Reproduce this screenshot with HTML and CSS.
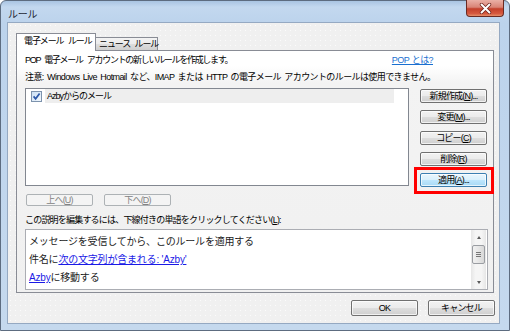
FILE: index.html
```html
<!DOCTYPE html>
<html lang="ja">
<head>
<meta charset="utf-8">
<title>ルール</title>
<link rel="stylesheet" href="styles.css">
</head>
<body>
<div class="window">
  <div class="titlebar">
    <span class="title">ルール</span>
    <div class="close">
      <svg width="13" height="11" viewBox="0 0 13 11"><path d="M2.5 1.5 L10.5 9.5 M10.5 1.5 L2.5 9.5" stroke="#6b2119" stroke-width="3.4" stroke-linecap="round"/><path d="M2.5 1.5 L10.5 9.5 M10.5 1.5 L2.5 9.5" stroke="#fff" stroke-width="2" stroke-linecap="round"/></svg>
    </div>
  </div>
  <div class="client">
    <div class="tabs">
      <div class="tab active">電子メール ルール</div>
      <div class="tab">ニュース ルール</div>
    </div>
    <div class="panel">
      <div class="row1">
        <span class="txt1">POP 電子メール アカウントの新しいルールを作成します。</span>
        <a class="poplink">POP とは?</a>
      </div>
      <div class="note">注意: Windows Live Hotmail など、IMAP または HTTP の電子メール アカウントのルールは使用できません。</div>
      <div class="mid">
        <div class="listbox">
          <div class="item">
            <svg class="cb" width="11" height="11" viewBox="0 0 11 11">
              <defs><linearGradient id="cbg" x1="0" y1="0" x2="1" y2="1"><stop offset="0" stop-color="#c9def3"/><stop offset="1" stop-color="#f4f9fd"/></linearGradient></defs>
              <rect x="0.5" y="0.5" width="10" height="10" fill="url(#cbg)" stroke="#7d93ad"/>
              <path d="M2.6 5.4 L4.6 7.8 L8.6 2.4" fill="none" stroke="#2c58a8" stroke-width="1.7"/>
            </svg>
            <span class="itemtext">Azbyからのメール</span>
          </div>
        </div>
        <div class="btncol">
          <div class="btn">新規作成(<u>N</u>)...</div>
          <div class="btn">変更(<u>M</u>)...</div>
          <div class="btn">コピー(<u>C</u>)</div>
          <div class="btn">削除(<u>R</u>)</div>
          <div class="btn apply">適用(<u>A</u>)...</div>
        </div>
      </div>
      <div class="updown">
        <div class="btn disabled">上へ(<u>U</u>)</div>
        <div class="btn disabled">下へ(<u>D</u>)</div>
      </div>
      <div class="label">この説明を編集するには、下線付きの単語をクリックしてください(<u>L</u>):</div>
      <div class="desc">
        <div class="lines">
          <div class="line">メッセージを受信してから、このルールを適用する</div>
          <div class="line">件名に<a class="dlink">次の文字列が含まれる: 'Azby'</a></div>
          <div class="line"><a class="dlink">Azby</a>に移動する</div>
        </div>
        <div class="scrollbar">
          <div class="arrow up"></div>
          <div class="thumb"><span class="grip"></span></div>
          <div class="track"></div>
          <div class="arrow down"></div>
        </div>
      </div>
    </div>
    <div class="footer">
      <div class="btn big">OK</div>
      <div class="btn big">キャンセル</div>
    </div>
  </div>
</div>
</body>
</html>
```
FILE: styles.css
```css
* { box-sizing: border-box; }
html, body { margin: 0; padding: 0; }
body {
  width: 510px;
  height: 331px;
  overflow: hidden;
  font-family: "Liberation Sans", "Noto Sans CJK JP", sans-serif;
  font-size: 9px;
  color: #000;
  background: #fff;
}
.window {
  width: 510px;
  height: 331px;
  display: flex;
  flex-direction: column;
  padding: 0 9px 6px 6px;
  border: 1px solid #5d6c80;
  border-radius: 6px 6px 0 0;
  background: linear-gradient(180deg, #a9c4e2 0, #c3d8ef 6px, #bcd3ec 22px, #c5d9ee 100%);
}
.titlebar {
  height: 21px;
  display: flex;
  align-items: flex-start;
  flex: none;
}
.title {
  margin-top: 5px;
  margin-left: 1px;
  font-size: 10px;
  letter-spacing: -0.2px;
  color: #1e2733;
}
.close {
  margin-left: auto;
  margin-right: -4px;
  margin-top: -1px;
  width: 38px;
  height: 17px;
  border: 1px solid #6a2a22;
  border-top: none;
  border-radius: 0 0 4px 4px;
  background: linear-gradient(180deg, #eab0a6 0, #d98476 45%, #c3402b 55%, #d6593f 85%, #e58f6a 100%);
  display: flex;
  align-items: center;
  justify-content: center;
}
.close svg { display: block; }
.client {
  flex: 1;
  border: 1px solid #95a9c2;
  background-color: #f0f0f0;
  background-image: radial-gradient(circle, #fbfbfb 0.6px, transparent 0.9px);
  background-size: 5px 5px;
  padding: 10px 7px 0 8px;
  display: flex;
  flex-direction: column;
}
.tabs {
  display: flex;
  align-items: flex-end;
  height: 17px;
  position: relative;
  z-index: 1;
}
.tab {
  border: 1px solid #898c95;
  border-bottom: none;
  padding: 0 4px 0 5px;
  white-space: nowrap;
  letter-spacing: -1.1px;
  word-spacing: 3px;
}
.tab.active {
  height: 18px;
  width: 80px;
  background: #fff;
  line-height: 15px;
  margin-bottom: -1px;
  padding-left: 7px;
}
.tab:not(.active) {
  height: 13px;
  width: 63px;
  line-height: 12px;
  margin-left: -1px;
  background: linear-gradient(180deg, #f3f3f3 0, #ebebeb 50%, #dddddd 51%, #cfcfcf 100%);
  padding-left: 3px;
}
.panel {
  width: 478px;
  height: 243px;
  border: 1px solid #898c95;
  background: linear-gradient(180deg, #ffffff 0, #ffffff 15px, #f3f3f3 32px, #f0f0f0 100%);
  padding: 2px 6px 0 8px;
  display: flex;
  flex-direction: column;
}
.row1 {
  height: 14px;
  line-height: 14px;
  display: flex;
  white-space: nowrap;
}
.txt1 { letter-spacing: -1.3px; word-spacing: 3px; }
.poplink {
  margin-left: auto;
  margin-right: 54px;
  color: #1a6fd0;
  text-decoration: underline;
  letter-spacing: -0.6px;
  word-spacing: 1px;
}
.note {
  margin-top: 3px;
  height: 14px;
  line-height: 14px;
  white-space: nowrap;
  letter-spacing: -0.6px;
  word-spacing: 1.5px;
}
.mid {
  margin-top: 4px;
  display: flex;
  gap: 11px;
}
.listbox {
  width: 384px;
  height: 98px;
  border: 1px solid #828790;
  background: #fff;
  padding: 0 14px 0 5px;
}
.item {
  display: flex;
  align-items: center;
  height: 14px;
}
.cb { flex: none; display: block; margin-top: 1px; }
.itemtext {
  flex: 1;
  margin-left: 3px;
  padding-left: 2px;
  height: 14px;
  line-height: 14px;
  background: #eeeeee;
  letter-spacing: -1px;
}
.btncol {
  margin-top: 1px;
  display: flex;
  flex-direction: column;
  gap: 7px;
}
.btn {
  width: 67px;
  height: 14px;
  border: 1px solid #707070;
  border-radius: 2px;
  background: linear-gradient(180deg, #f2f2f2 0, #ebebeb 50%, #dddddd 51%, #cfcfcf 100%);
  box-shadow: inset 0 0 0 1px rgba(255,255,255,0.7);
  text-align: center;
  line-height: 12px;
  white-space: nowrap;
  letter-spacing: -0.8px;
}
.btn u { text-decoration: underline; }
.btn.apply {
  position: relative;
  border-color: #3c7fb1;
  background: linear-gradient(180deg, #eaf6fd 0, #d9f0fc 50%, #bee6fd 51%, #a7d9f5 100%);
}
.btn.apply::after {
  content: "";
  position: absolute;
  left: -7px;
  right: -8px;
  top: -7px;
  bottom: -8px;
  border: 3px solid #ff0000;
}
.updown {
  margin-top: 7px;
  display: flex;
  gap: 11px;
  padding-left: 1px;
}
.btn.disabled {
  height: 12px;
  line-height: 10px;
  border-color: #adb2b5;
  background: #f4f4f4;
  color: #838383;
  box-shadow: none;
}
.label {
  margin-top: 8px;
  height: 12px;
  line-height: 12px;
  white-space: nowrap;
  letter-spacing: -0.8px;
}
.desc {
  margin-top: 3px;
  width: 463px;
  height: 61px;
  border: 1px solid #abadb3;
  background: #fff;
  display: flex;
  padding-right: 1px;
}
.lines {
  flex: 1;
  padding: 3px 0 0 3px;
}
.line {
  height: 18px;
  line-height: 18px;
  white-space: nowrap;
  font-size: 10px;
  letter-spacing: -0.2px;
  color: #222;
}
.dlink {
  color: #1a1ae6;
  text-decoration: underline;
}
.scrollbar {
  width: 15px;
  display: flex;
  flex-direction: column;
  background: linear-gradient(90deg, #e6e6e6 0, #f5f5f5 30%, #f5f5f5 70%, #e6e6e6 100%);
}
.arrow {
  height: 14px;
  flex: none;
  display: flex;
  align-items: center;
  justify-content: center;
}
.arrow::before {
  content: "";
  width: 0;
  height: 0;
  border-left: 2.5px solid transparent;
  border-right: 2.5px solid transparent;
}
.arrow.up::before { border-bottom: 3px solid #5a5a5a; }
.arrow.down::before { border-top: 3px solid #5a5a5a; }
.thumb {
  margin: 1px 1px 0 1px;
  height: 19px;
  flex: none;
  border: 1px solid #9a9da2;
  border-radius: 2px;
  background: linear-gradient(90deg, #f1f1f1 0, #e6e6e6 50%, #d8d8d8 100%);
  display: flex;
  align-items: center;
  justify-content: center;
}
.grip {
  width: 5px;
  height: 5px;
  border-top: 1px solid #777;
  border-bottom: 1px solid #777;
  position: relative;
}
.grip::after {
  content: "";
  position: absolute;
  left: 0;
  right: 0;
  top: 1px;
  border-top: 1px solid #777;
}
.track { flex: 1; }
.footer {
  margin-top: 7px;
  margin-right: -3px;
  display: flex;
  justify-content: flex-end;
  gap: 10px;
}
.btn.big {
  height: 16px;
  line-height: 14px;
  width: 67px;
}
```
